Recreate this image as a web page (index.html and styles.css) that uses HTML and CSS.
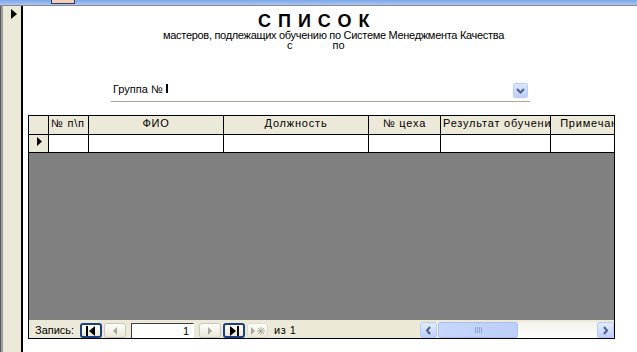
FILE: index.html
```html
<!DOCTYPE html>
<html lang="ru">
<head>
    <meta charset="UTF-8">
    <title>Список мастеров</title>
    <link rel="stylesheet" href="styles.css">
</head>
<body>
    <div class="topbar"><span class="tab"></span></div>
    <div class="main">
        <div class="edge"></div>
        <div class="selector">
            <svg class="tri" width="7" height="11" viewBox="0 0 7 11"><polygon points="0,0 6,5 0,10" fill="#000"/></svg>
        </div>
        <div class="form">
            <div class="title">СПИСОК</div>
            <div class="sub">мастеров, подлежащих обучению по Системе Менеджмента Качества</div>
            <div class="dates"><span class="from">с</span><span class="to">по</span></div>

            <div class="group">
                <span class="group-label">Группа №</span>
                <span class="caret"></span>
                <span class="drop">
                    <svg width="9" height="6" viewBox="0 0 9 6"><polyline points="1,1 4.5,4.5 8,1" fill="none" stroke="#4d6185" stroke-width="2"/></svg>
                </span>
            </div>

            <div class="sheet">
                <div class="row head">
                    <div class="cell sel"></div>
                    <div class="cell left">№ п\п</div>
                    <div class="cell">ФИО</div>
                    <div class="cell">Должность</div>
                    <div class="cell">№ цеха</div>
                    <div class="cell left">Результат обучения</div>
                    <div class="cell last">Примечание</div>
                </div>
                <div class="row data">
                    <div class="cell sel">
                        <svg width="6" height="10" viewBox="0 0 6 10"><polygon points="0,0 5,4.5 0,9" fill="#000"/></svg>
                    </div>
                    <div class="cell"></div>
                    <div class="cell"></div>
                    <div class="cell"></div>
                    <div class="cell"></div>
                    <div class="cell"></div>
                    <div class="cell last"></div>
                </div>
                <div class="empty"></div>
                <div class="nav">
                    <span class="nav-label">Запись:</span>
                    <span class="btn active">
                        <svg width="12" height="10" viewBox="0 0 12 10"><rect x="1" y="0" width="2" height="10" fill="#000"/><polygon points="10,0 4,5 10,10" fill="#000"/></svg>
                    </span>
                    <span class="btn off">
                        <svg width="12" height="10" viewBox="0 0 12 10"><polygon points="8,1 4,5 8,9" fill="#aca899"/></svg>
                    </span>
                    <span class="recno">1</span>
                    <span class="btn off">
                        <svg width="12" height="10" viewBox="0 0 12 10"><polygon points="4,1 8,5 4,9" fill="#aca899"/></svg>
                    </span>
                    <span class="btn active">
                        <svg width="12" height="10" viewBox="0 0 12 10"><polygon points="2,0 8,5 2,10" fill="#000"/><rect x="9" y="0" width="2" height="10" fill="#000"/></svg>
                    </span>
                    <span class="btn off new">
                        <svg width="16" height="10" viewBox="0 0 16 10"><polygon points="1,1 5,5 1,9" fill="#aca899"/><g stroke="#aca899" stroke-width="1"><line x1="11" y1="1" x2="11" y2="9"/><line x1="7" y1="5" x2="15" y2="5"/><line x1="8" y1="2" x2="14" y2="8"/><line x1="14" y1="2" x2="8" y2="8"/></g></svg>
                    </span>
                    <span class="nav-count">из 1</span>

                    <div class="hscroll">
                        <span class="arrow">
                            <svg width="7" height="9" viewBox="0 0 7 9"><polyline points="5,1 2,4.5 5,8" fill="none" stroke="#4d6185" stroke-width="2"/></svg>
                        </span>
                        <span class="thumb"><span class="grip"></span></span>
                        <span class="track"></span>
                        <span class="arrow">
                            <svg width="7" height="9" viewBox="0 0 7 9"><polyline points="2,1 5,4.5 2,8" fill="none" stroke="#4d6185" stroke-width="2"/></svg>
                        </span>
                    </div>
                </div>
            </div>
        </div>
    </div>
</body>
</html>
```

FILE: styles.css
```css
* {
    box-sizing: border-box;
}

body {
    margin: 0;
    width: 637px;
    height: 352px;
    overflow: hidden;
    background: #ffffff;
    font-family: "Liberation Sans", Arial, sans-serif;
    font-size: 11px;
    color: #000;
}

.topbar {
    height: 6px;
    background: linear-gradient(#7ea6ea, #a9c6f3);
    border-bottom: 1px solid #8c8c8c;
    position: relative;
}

.tab {
    position: absolute;
    left: 51px;
    top: 0;
    width: 24px;
    height: 4px;
    background: #f7cdb3;
    border: 1px solid #23397a;
    border-top: none;
}

.main {
    display: flex;
    height: 346px;
}

.edge {
    width: 3px;
    background: #9d9da1;
    border-left: 1px solid #5a5a5a;
}

.selector {
    width: 20px;
    background: #ece9d8;
    border-right: 2px solid #000;
    padding: 3px 0 0 8px;
}

.tri {
    display: block;
}

.form {
    flex: 1;
    background: #fff;
    padding-top: 7px;
}

/* заголовок */
.title {
    padding-left: 235px;
    font-size: 18px;
    font-weight: bold;
    line-height: 17px;
    height: 17px;
    letter-spacing: 7px;
}

.sub {
    padding-left: 140px;
    line-height: 10px;
    height: 10px;
    letter-spacing: -0.3px;
}

.dates {
    line-height: 10px;
    height: 10px;
    display: flex;
}

.from {
    margin-left: 264px;
}

.to {
    margin-left: 40px;
}

/* поле группы */
.group {
    margin: 30px 0 0 88px;
    width: 419px;
    height: 22px;
    padding-top: 3px;
    border-bottom: 1px solid #aca899;
    display: flex;
    align-items: flex-start;
}

.group-label {
    line-height: 12px;
    padding-left: 2px;
}

.caret {
    width: 2px;
    height: 9px;
    margin: 1px 0 0 3px;
    background: #000;
}

.drop {
    margin-left: auto;
    margin-right: 2px;
    width: 15px;
    height: 15px;
    border: 1px solid #b9cdf7;
    border-radius: 2px;
    background: linear-gradient(#dde7fd, #bccff9);
    display: flex;
    align-items: center;
    justify-content: center;
}

/* таблица */
.sheet {
    margin: 13px 0 0 5px;
    width: 587px;
    border: 1px solid #000;
}

.row {
    display: grid;
    grid-template-columns: 20px 40px 135px 145px 72px 110px 90px;
    overflow: hidden;
}

.row.head {
    height: 19px;
    background: #ece9d8;
    border-bottom: 1px solid #000;
}

.row.data {
    height: 18px;
    border-bottom: 1px solid #000;
}

.cell {
    border-right: 1px solid #000;
    overflow: hidden;
    white-space: nowrap;
    text-align: center;
    line-height: 15px;
    letter-spacing: 0.8px;
}

.cell.left {
    text-align: left;
    padding-left: 2px;
}

.cell.last {
    border-right: none;
}

.cell.sel {
    background: #ece9d8;
    padding: 2px 0 0 8px;
    text-align: left;
}

.cell.sel svg {
    display: block;
}

.empty {
    height: 167px;
    background: #808080;
}

/* навигация */
.nav {
    height: 18px;
    background: #ece9d8;
    display: flex;
    align-items: flex-end;
}

.nav-label {
    padding-left: 6px;
    line-height: 15px;
    width: 51px;
}

.btn {
    width: 22px;
    height: 15px;
    margin-right: 2px;
    border: 1px solid #c9c7ba;
    border-radius: 3px;
    background: linear-gradient(#fdfdfb, #ece9d8);
    display: flex;
    align-items: center;
    justify-content: center;
}

.btn.active {
    border: 2px solid #1c3f7f;
}

.btn.new {
    width: 21px;
    border-color: #dcd9cb;
}

.recno {
    width: 63px;
    height: 15px;
    margin: 0 5px 0 3px;
    background: #fff;
    border-top: 1px solid #404040;
    border-left: 1px solid #404040;
    border-right: 1px solid #fff;
    text-align: right;
    padding-right: 4px;
    line-height: 14px;
}

.nav-count {
    margin-left: 4px;
    line-height: 15px;
    letter-spacing: 0.5px;
}

.hscroll {
    margin-left: auto;
    width: 194px;
    height: 16px;
    display: flex;
    background: #f7f6f1;
}

.arrow {
    width: 17px;
    height: 16px;
    border: 1px solid #b7cbf6;
    border-radius: 2px;
    background: linear-gradient(#e3ebfd, #bdcff9);
    display: flex;
    align-items: center;
    justify-content: center;
}

.thumb {
    width: 80px;
    margin-left: 1px;
    border: 1px solid #a9bff0;
    border-radius: 2px;
    background: linear-gradient(90deg, #c7d6fa, #bccff9);
    display: flex;
    align-items: center;
    justify-content: center;
}

.grip {
    width: 7px;
    height: 6px;
    background: repeating-linear-gradient(90deg, #8aa4dc 0 1px, transparent 1px 2px);
}

.track {
    flex: 1;
    background: linear-gradient(#f3f2ec, #fdfdfa);
}
```
